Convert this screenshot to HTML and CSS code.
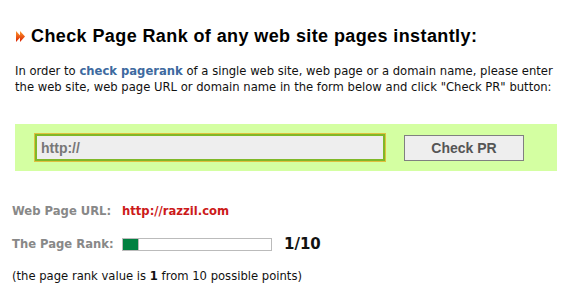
FILE: index.html
```html
<!DOCTYPE html>
<html lang="en">
  <head>
    <meta charset="UTF-8" />
    <title>Check Page Rank</title>
    <link rel="stylesheet" href="styles.css">
  </head>
  <body>
    <div class="page">
      <h1>
        <svg class="arrow" width="9" height="11" viewBox="0 0 9 11">
          <defs>
            <linearGradient id="ar" x1="0" y1="0" x2="0" y2="1">
              <stop offset="0" stop-color="#ff9a2e" />
              <stop offset="1" stop-color="#d81e00" />
            </linearGradient>
          </defs>
          <path d="M0 0 L5 5.5 L0 11 Z M4 0 L9 5.5 L4 11 Z" fill="url(#ar)" />
        </svg>
        Check Page Rank of any web site pages instantly:
      </h1>

      <p class="intro">
        In order to <a href="#">check pagerank</a> of a single web site, web page or a domain name, please enter<br>
        the web site, web page URL or domain name in the form below and click "Check PR" button:
      </p>

      <form class="check-form">
        <input type="text" class="url-input" value="http://" />
        <button type="button" class="btn">Check PR</button>
      </form>

      <div class="result">
        <div class="row">
          <span class="label">Web Page URL:</span>
          <span class="url">http://razzil.com</span>
        </div>
        <div class="row">
          <span class="label">The Page Rank:</span>
          <span class="bar"><span class="fill" style="width: 10%"></span></span>
          <span class="score">1/10</span>
        </div>
        <p class="note">(the page rank value is <b>1</b> from 10 possible points)</p>
      </div>
    </div>
  </body>
</html>
```

FILE: styles.css
```css
body {
  margin: 0;
  background: #fff;
  font-family: "DejaVu Sans", Verdana, sans-serif;
  font-size: 11.6px;
  color: #111;
}

.page {
  width: 542px;
  padding: 24px 0 0 15px;
}

h1 {
  display: flex;
  align-items: center;
  gap: 6px;
  margin: 0;
  padding-left: 1px;
  font-family: "Liberation Sans", Arial, sans-serif;
  font-size: 18px;
  line-height: 24px;
  letter-spacing: 0.4px;
  color: #000;
}

.arrow {
  flex: none;
  margin-top: 1px;
}

.intro {
  margin: 15px 0 0;
  line-height: 16px;
}

.intro a {
  color: #3e6aa0;
  font-weight: bold;
  text-decoration: none;
}

.check-form {
  display: flex;
  align-items: center;
  margin-top: 29px;
  height: 47px;
  padding-left: 20px;
  background: #d4ffa2;
}

.url-input {
  box-sizing: border-box;
  width: 350px;
  height: 27px;
  margin: 0;
  padding: 0 0 0 4px;
  border: 2px solid #80b828;
  outline: 1px solid #e0c040;
  background: #eeeeee;
  font-family: "Liberation Sans", Arial, sans-serif;
  font-size: 14px;
  font-weight: bold;
  color: #777;
}

.btn {
  box-sizing: border-box;
  width: 120px;
  height: 26px;
  margin-left: 19px;
  border: 1px solid #808080;
  background: #eeeeee;
  font-family: "Liberation Sans", Arial, sans-serif;
  font-size: 14px;
  font-weight: bold;
  color: #555;
}

.result {
  margin-left: -3px;
  padding-top: 32px;
}

.row {
  display: flex;
  align-items: center;
  height: 16px;
  margin-bottom: 16px;
}

.row + .row {
  margin-top: 17px;
}

.label {
  width: 110px;
  font-weight: bold;
  color: #888;
}

.url {
  font-weight: bold;
  color: #cc1a1a;
}

.bar {
  box-sizing: border-box;
  width: 150px;
  height: 13px;
  border: 1px solid #bbbbbb;
  background: #fff;
}

.fill {
  display: block;
  height: 100%;
  background: #008040;
  border-right: 1px solid #bbbbbb;
}

.score {
  margin-left: 12px;
  font-size: 15px;
  font-weight: bold;
  color: #111;
}

.note {
  margin: 6px 0 0;
  line-height: 16px;
}
```
